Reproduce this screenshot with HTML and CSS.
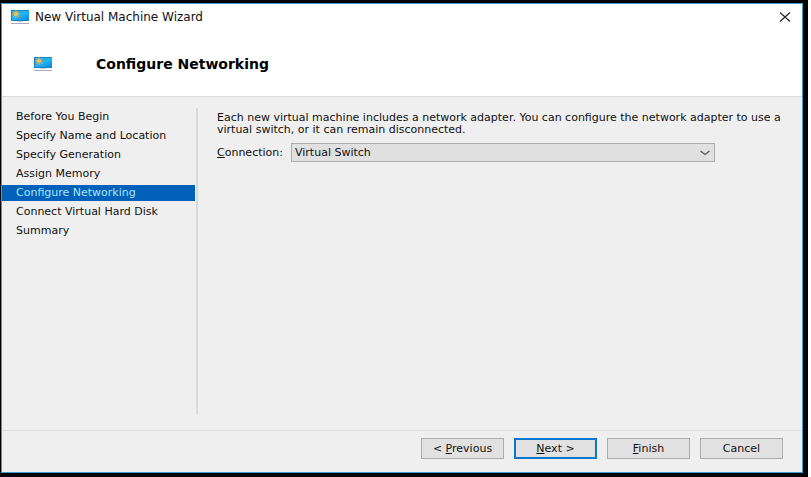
FILE: index.html
```html
<!DOCTYPE html>
<html lang="en">
	<head>
		<meta charset="UTF-8">
		<title>New Virtual Machine Wizard</title>
		<link rel="stylesheet" href="styles.css">
	</head>
	<body>
		<svg class="defs" width="0" height="0" aria-hidden="true">
			<defs>
				<linearGradient id="screen" x1="0" y1="0" x2="1" y2="1">
					<stop offset="0" stop-color="#3aa6dc"/>
					<stop offset="0.5" stop-color="#22b4f4"/>
					<stop offset="1" stop-color="#0c86d8"/>
				</linearGradient>
				<symbol id="vm" viewBox="0 0 20 14">
					<rect x="1" y="0" width="18" height="11" fill="#1683c6"/>
					<rect x="2" y="1" width="17" height="9" fill="url(#screen)"/>
					<path d="M6 0v8M2 4h8M3 1l6 6M9 1l-6 6" stroke="#d9b653" stroke-width="1"/>
					<circle cx="6" cy="4" r="2" fill="#f2c14a"/>
					<path d="M7 11h6v1H7z" fill="#b4d4e6"/>
					<path d="M1 13h18v1H1z" fill="#a9a6bd"/>
				</symbol>
			</defs>
		</svg>
		<div class="wizard">
			<header class="header">
				<div class="titlebar">
					<svg class="icon"><use href="#vm"/></svg>
					<span class="title">New Virtual Machine Wizard</span>
					<button class="close" type="button" aria-label="Close">
						<svg width="12" height="10" viewBox="0 0 12 10"><path d="M1 0.5l10 9M11 0.5l-10 9" stroke="#222" stroke-width="1.2"/></svg>
					</button>
				</div>
				<div class="banner">
					<svg class="icon"><use href="#vm"/></svg>
					<h1>Configure Networking</h1>
				</div>
			</header>
			<main class="main">
				<nav class="steps">
					<a href="#">Before You Begin</a>
					<a href="#">Specify Name and Location</a>
					<a href="#">Specify Generation</a>
					<a href="#">Assign Memory</a>
					<a href="#" class="active">Configure Networking</a>
					<a href="#">Connect Virtual Hard Disk</a>
					<a href="#">Summary</a>
				</nav>
				<section class="content">
					<p>Each new virtual machine includes a network adapter. You can configure the network adapter to use a virtual switch, or it can remain disconnected.</p>
					<div class="field">
						<label for="connection"><u>C</u>onnection:</label>
						<div class="select">
							<select id="connection">
								<option>Virtual Switch</option>
							</select>
							<svg class="arrow" width="10" height="6" viewBox="0 0 10 6"><path d="M0.5 1l4.5 3.5L9.5 1" fill="none" stroke="#555" stroke-width="1.2"/></svg>
						</div>
					</div>
				</section>
			</main>
			<footer class="footer">
				<button type="button">&lt; <u>P</u>revious</button>
				<button type="button" class="default"><u>N</u>ext &gt;</button>
				<button type="button"><u>F</u>inish</button>
				<button type="button">Cancel</button>
			</footer>
		</div>
	</body>
</html>
```
FILE: styles.css
```css
*{
	box-sizing: border-box;
	margin: 0;
	padding: 0;
}
html{
	background-color: #fff;
}
body{
	height: 100vh;
	margin-right: 3px;
	padding: 3px 5px 4px 1px;
	background-color: #000;
	color: #111;
	font: 11px/12px "DejaVu Sans", Verdana, sans-serif;
}
.defs{
	position: absolute;
}
.wizard{
	height: 100%;
	display: flex;
	flex-direction: column;
	border: 1px solid #3a9fd0;
	background-color: #efefef;
}
.header{
	padding-bottom: 20px;
	border-bottom: 1px solid #dcdcdc;
	background-color: #fff;
}
.titlebar{
	height: 26px;
	display: flex;
	align-items: center;
	padding: 0 11px 0 8px;
}
.icon{
	width: 20px;
	height: 14px;
}
.title{
	flex: 1;
	margin-left: 5px;
	font-size: 12px;
}
.close{
	display: flex;
	border: 0;
	background: none;
}
.banner{
	display: flex;
	align-items: center;
	padding: 22px 0 0 31px;
}
.banner h1{
	margin-left: 43px;
	font-size: 14px;
	line-height: 24px;
	color: #000;
}
.main{
	flex: 1;
	display: flex;
	padding: 11px 18px 16px 0;
}
.steps{
	width: 196px;
	padding: 1px 1px 0 0;
	border-right: 2px solid #dadada;
}
.steps a{
	display: block;
	margin-bottom: 3px;
	padding-left: 14px;
	line-height: 16px;
	color: #111;
	text-decoration: none;
}
.steps .active{
	background-color: #0060ba;
	color: #a9e6f5;
}
.content{
	flex: 1;
	padding: 4px 0 0 19px;
}
.field{
	display: flex;
	align-items: center;
	margin-top: 7px;
}
.field label{
	width: 74px;
}
.select{
	width: 424px;
	position: relative;
}
.select select{
	width: 100%;
	height: 19px;
	display: block;
	padding-left: 3px;
	border: 1px solid #adadad;
	border-radius: 0;
	background-color: #e0e0e0;
	color: #111;
	font: inherit;
	appearance: none;
}
.arrow{
	position: absolute;
	top: 7px;
	right: 5px;
	pointer-events: none;
}
.footer{
	display: flex;
	justify-content: flex-end;
	gap: 10px;
	padding: 7px 19px 13px;
	border-top: 1px solid #dcdcdc;
}
.footer button{
	width: 83px;
	height: 21px;
	border: 1px solid #adadad;
	background-color: #e1e1e1;
	color: #111;
	font: inherit;
}
.footer .default{
	border: 2px solid #0a78d0;
}
```
